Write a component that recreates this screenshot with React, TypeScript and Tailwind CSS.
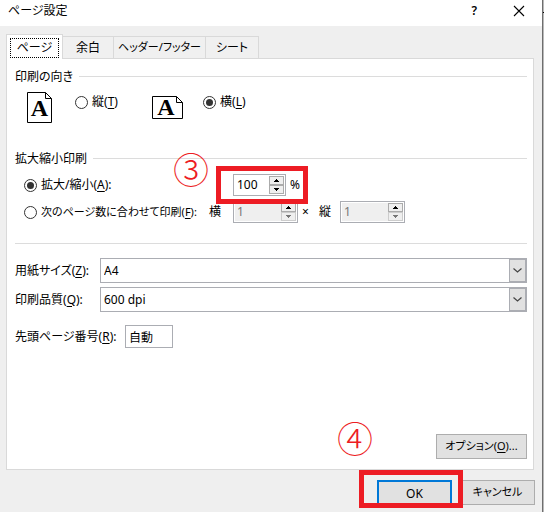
import type { ReactNode } from "react";
import clsx from "clsx";

const tabs = ["ページ", "余白", "ヘッダー/フッター", "シート"];
const tabWidths = ["w-[57px]", "w-[51px]", "w-[92px]", "w-[53px]"];

function Key({ text, k }: { text: string; k: string }) {
  return (
    <>
      {text}(<span className="underline underline-offset-2">{k}</span>)
    </>
  );
}

function GroupTitle({ children }: { children: ReactNode }) {
  return (
    <div className="flex h-[17px] items-center gap-1.5">
      <h2 className="leading-[17px]">{children}</h2>
      <span className="h-px flex-1 bg-[#dcdcdc]" />
    </div>
  );
}

function Radio({
  name,
  checked,
  small,
  children,
}: {
  name: string;
  checked?: boolean;
  small?: boolean;
  children: ReactNode;
}) {
  return (
    <label className="flex items-center gap-1 whitespace-nowrap">
      <input
        type="radio"
        name={name}
        defaultChecked={checked}
        className="grid size-[13px] shrink-0 appearance-none place-items-center rounded-full border border-[#333] bg-white before:size-[7px] before:rounded-full checked:before:bg-[#333]"
      />
      <span className={clsx(small && "text-[11px]")}>{children}</span>
    </label>
  );
}

function Spinner({
  label,
  value,
  disabled,
}: {
  label: string;
  value: string;
  disabled?: boolean;
}) {
  const button =
    "grid h-[9px] flex-1 place-items-center border border-[#ababab] bg-[#efefef]";
  return (
    <div
      className={clsx(
        "flex h-[22px] border border-[#abadb3] bg-white p-px",
        disabled ? "w-[65px]" : "w-[53px]",
      )}
    >
      <input
        aria-label={label}
        defaultValue={value}
        disabled={disabled}
        className="min-w-0 flex-1 pl-0.5 leading-4 disabled:bg-[#efefef] disabled:text-[#777]"
      />
      <div className="flex w-[15px] flex-col">
        <button type="button" aria-label={`${label} +`} className={button}>
          <svg width="5" height="3" viewBox="0 0 5 3">
            <path d="M2 0h1v1h1v1h1v1H0V2h1V1h1z" />
          </svg>
        </button>
        <button
          type="button"
          aria-label={`${label} -`}
          disabled={disabled}
          className={clsx(button, disabled && "border-[#ccc]")}
        >
          <svg
            width="5"
            height="3"
            viewBox="0 0 5 3"
            fill={disabled ? "#777" : "#000"}
          >
            <path d="M0 0h5v1H4v1H3v1H2V2H1V1H0z" />
          </svg>
        </button>
      </div>
    </div>
  );
}

function Dropdown({
  id,
  text,
  k,
  value,
}: {
  id: string;
  text: string;
  k: string;
  value: string;
}) {
  return (
    <div className="flex items-center">
      <label htmlFor={id} className="w-[85px] shrink-0 whitespace-nowrap">
        <Key text={text} k={k} />:
      </label>
      <div className="relative flex-1">
        <select
          id={id}
          className="block h-[25px] w-full appearance-none rounded-none border border-[#abadb3] bg-white pl-[3px]"
        >
          <option>{value}</option>
        </select>
        <span className="pointer-events-none absolute inset-y-px right-px grid w-[17px] place-items-center border border-[#abadb3] bg-[#e1e1e1]">
          <svg width="9" height="5" viewBox="0 0 9 5" fill="none" stroke="#444">
            <path d="M.5.5l4 3.5 4-3.5" strokeWidth="1.2" />
          </svg>
        </span>
      </div>
    </div>
  );
}

function PageIcon({ landscape }: { landscape?: boolean }) {
  const w = landscape ? 31 : 25;
  const h = landscape ? 23 : 31;
  return (
    <svg
      width={w}
      height={h}
      viewBox={`0 0 ${w} ${h}`}
      className="shrink-0 overflow-visible"
    >
      <path
        d={`M.5.5H${w - 6.5}L${w - 0.5} 6.5V${h - 0.5}H.5z`}
        fill="#fff"
        stroke="#000"
      />
      <path d={`M${w - 6.5}.5v6h6`} fill="none" stroke="#000" />
      <text
        x={landscape ? 14 : 12.5}
        y={landscape ? 19 : 24}
        textAnchor="middle"
        className="font-['Liberation_Serif',serif] text-2xl font-bold"
      >
        A
      </text>
    </svg>
  );
}

function Frame({ className }: { className: string }) {
  return (
    <span
      className={clsx(
        "pointer-events-none absolute z-10 border-[5px] border-[#ed1c24]",
        className,
      )}
    />
  );
}

function Step({ n, className }: { n: string; className: string }) {
  return (
    <span
      className={clsx(
        "pointer-events-none absolute font-['Noto_Sans_CJK_JP',sans-serif] text-[36px] leading-9 font-light text-[#ed1c24]",
        className,
      )}
    >
      {n}
    </span>
  );
}

const pushButton =
  "h-[25px] border border-[#adadad] bg-[#e1e1e1] text-center text-[11px]";

export default function App() {
  return (
    <div className="flex min-h-screen bg-[#efefef] font-['Noto_Sans','Noto_Sans_CJK_JP',sans-serif] text-xs text-black [font-feature-settings:'palt']">
      <div className="flex min-w-0 flex-1 flex-col">
        <header className="flex h-[26px] items-center bg-white pr-[17px] pl-2">
          <h1 className="flex-1 pb-1">ページ設定</h1>
          <button type="button" className="mr-9 pb-1 font-semibold">
            ?
          </button>
          <button type="button" aria-label="閉じる" className="pb-1">
            <svg width="12" height="12" viewBox="0 0 12 12" stroke="#000">
              <path d="M1 1l10 10M11 1L1 11" strokeWidth="1.1" />
            </svg>
          </button>
        </header>

        <main className="flex flex-1 flex-col pr-2 pl-1.5">
          <div role="tablist" className="flex h-8 items-end">
            {tabs.map((tab, i) => (
              <button
                key={tab}
                type="button"
                role="tab"
                aria-selected={i === 0}
                className={clsx(
                  "whitespace-nowrap border-[#d9d9d9]",
                  tabWidths[i],
                  i === 0
                    ? "relative -mb-px h-[25px] border-x border-t bg-white px-[3px] pt-[3px] pb-0.5"
                    : "h-[22px] border-t border-r bg-[#f0f0f0]",
                  tab.length > 5 && "text-[11px]",
                )}
              >
                {i === 0 ? (
                  <span className="grid h-5 place-items-center border border-dotted border-black">
                    {tab}
                  </span>
                ) : (
                  tab
                )}
              </button>
            ))}
          </div>

          <section className="flex h-[412px] flex-col border border-[#d9d9d9] bg-white pt-[9px] pr-1.5 pl-2">
            <GroupTitle>印刷の向き</GroupTitle>
            <div className="mt-[7px] flex h-[31px] pl-3">
              <PageIcon />
              <div className="ml-[23px] w-[77px] pt-0.5">
                <Radio name="orientation">
                  <Key text="縦" k="T" />
                </Radio>
              </div>
              <div className="flex items-center">
                <PageIcon landscape />
              </div>
              <div className="ml-5 pt-0.5">
                <Radio name="orientation" checked>
                  <Key text="横" k="L" />
                </Radio>
              </div>
            </div>

            <div className="relative mt-[27px]">
              <GroupTitle>拡大縮小印刷</GroupTitle>
              <Step n="③" className="top-0 left-[158px]" />
            </div>
            <div className="mt-[7px] flex h-[22px] items-center pl-[9px]">
              <div className="w-[209px]">
                <Radio name="scaling" checked>
                  <Key text="拡大/縮小" k="A" />:
                </Radio>
              </div>
              <div className="relative flex items-center gap-1">
                <Spinner label="拡大/縮小" value="100" />
                <span>%</span>
                <Frame className="-top-2 -right-2 -bottom-2 -left-[17px]" />
              </div>
            </div>
            <div className="mt-[5px] flex h-[22px] items-center pl-[9px]">
              <div className="w-[185px]">
                <Radio name="scaling" small>
                  <Key text="次のページ数に合わせて印刷" k="F" />:
                </Radio>
              </div>
              <span className="w-6">横</span>
              <Spinner label="横" value="1" disabled />
              <span className="w-[21px] pl-1">×</span>
              <span className="w-[21px]">縦</span>
              <Spinner label="縦" value="1" disabled />
            </div>

            <hr className="mt-5 border-[#dcdcdc]" />

            <div className="mt-3.5 flex flex-col gap-1">
              <Dropdown id="paper" text="用紙サイズ" k="Z" value="A4" />
              <Dropdown id="quality" text="印刷品質" k="Q" value="600 dpi" />
            </div>
            <div className="mt-[13px] flex items-center">
              <label htmlFor="first" className="w-[110px] whitespace-nowrap">
                <Key text="先頭ページ番号" k="R" />:
              </label>
              <input
                id="first"
                defaultValue="自動"
                className="h-[23px] w-12 border border-[#abadb3] bg-white pl-[3px]"
              />
            </div>

            <div className="relative mt-auto mb-2.5 flex justify-end">
              <Step n="④" className="-top-[15px] right-[154px]" />
              <button type="button" className={clsx(pushButton, "w-[91px]")}>
                <Key text="オプション" k="O" />
                ...
              </button>
            </div>
          </section>

          <footer className="flex justify-end gap-2 pt-2.5 pb-[7px]">
            <div className="relative">
              <button
                type="button"
                className="block h-[25px] w-[75px] border-2 border-b-0 border-[#0078d7] bg-[#e1e1e1]"
              >
                OK
              </button>
              <Frame className="-top-2.5 -right-[11px] -bottom-[3px] -left-[18px]" />
            </div>
            <button type="button" className={clsx(pushButton, "-mr-px w-[75px]")}>
              キャンセル
            </button>
          </footer>
        </main>
      </div>
      <div className="flex w-0.5 flex-col border-l border-[#6e6e6e] bg-[#b9b9b9]">
        <span className="mt-3 h-px bg-black" />
      </div>
    </div>
  );
}
